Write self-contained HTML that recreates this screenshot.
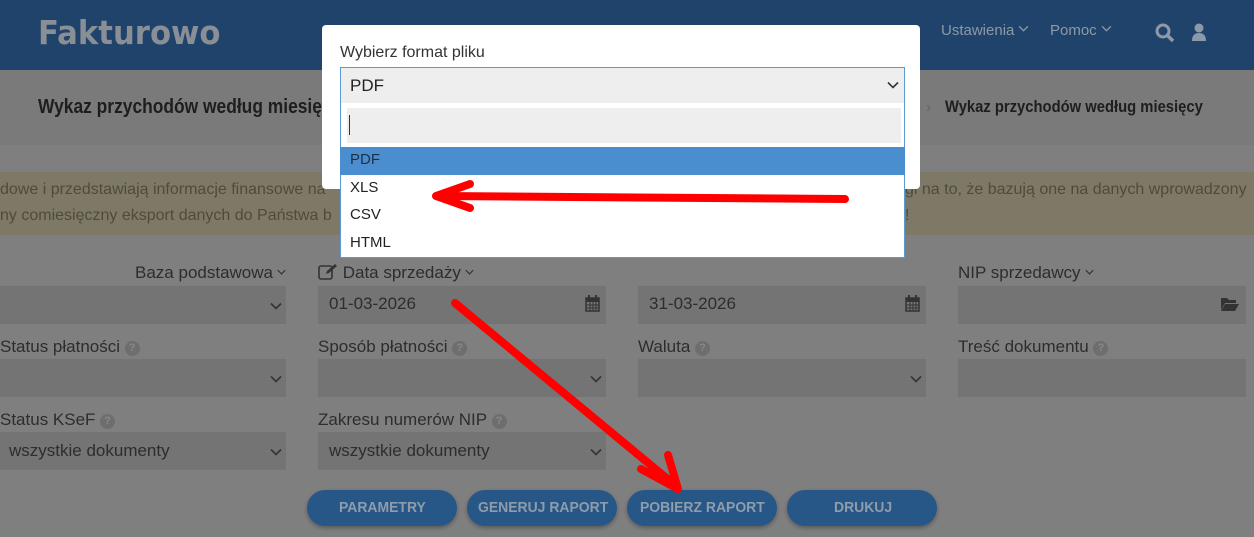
<!DOCTYPE html><html><head><meta charset="utf-8"><style>
*{margin:0;padding:0;box-sizing:border-box}
body{width:1254px;height:537px;overflow:hidden;background:#7f7f7f;font-family:"Liberation Sans",sans-serif;color:#2b2b2b;position:relative}
.a{position:absolute;white-space:nowrap}
.n{transform:scaleX(0.87);transform-origin:0 0}
.hdr{left:0;top:0;width:1254px;height:70px;background:#1f436a}
.logo{left:38px;top:13px;font:bold 33px "DejaVu Sans",sans-serif;color:#8a8f96;transform:scaleX(0.93);transform-origin:0 0}
.nav{top:22px;font-size:15px;color:#8c99a8}
.band{left:0;top:70px;width:1254px;height:75px;background:#7a7a7a}
.warn{left:0;top:172px;width:1254px;height:63px;background:#7e7967}
.wt{font-size:16px;color:#4f4a3a}
.lbl{font-size:17px;color:#2d2d2d}
.inp{background:#747474;height:38px}
.btn{height:36px;border-radius:18px;background:#275786;top:490px;width:150px;box-shadow:0 2px 4px rgba(0,0,0,.3)}
.bt{top:499px;font-size:15px;font-weight:bold;color:#8e9cab;transform:scaleX(0.93);transform-origin:0 0}
.q{display:inline-block;width:15px;height:15px;border-radius:50%;background:#6e6e6e;color:#888;font-size:11px;line-height:15px;text-align:center;vertical-align:1px;font-weight:bold}
.ic{display:inline-block;vertical-align:3px;margin-left:4px}
.modal{left:322px;top:25px;width:598px;height:164px;background:#fff;border-radius:4px}
.dd{left:340px;top:103px;width:565px;height:155px;background:#fff;border:1px solid #5b9bd5;border-top:none}
.opt{left:350px;font-size:15px;color:#222}
</style></head><body>
<svg width="0" height="0" style="position:absolute"><defs><symbol id="cv" viewBox="0 0 12 8"><path d="M1 1.5l5 5 5-5" stroke="#333" stroke-width="1.6" fill="none"/></symbol><symbol id="cn" viewBox="0 0 12 8"><path d="M1 1.5l5 5 5-5" stroke="#8c99a8" stroke-width="1.6" fill="none"/></symbol></defs></svg>
<div class="a hdr"></div>
<div class="a logo">Fakturowo</div>
<div class="a nav" style="left:941px">Ustawienia<svg class="ic" width="11" height="7"><use href="#cn"/></svg></div>
<div class="a nav" style="left:1050px">Pomoc<svg class="ic" width="11" height="7"><use href="#cn"/></svg></div>
<svg class="a" style="left:1155px;top:23px" width="20" height="20" viewBox="0 0 20 20"><circle cx="8" cy="8" r="6" stroke="#8c99a8" stroke-width="3" fill="none"/><path d="M12 12l6 6" stroke="#8c99a8" stroke-width="3.5"/></svg>
<svg class="a" style="left:1191px;top:23px" width="16" height="18" viewBox="0 0 16 18"><circle cx="8" cy="5" r="4.5" fill="#8c99a8"/><path d="M1 18c0-6 3-8 7-8s7 2 7 8z" fill="#8c99a8"/></svg>
<div class="a band"></div>
<div class="a n" style="left:38px;top:96px;font-size:20px;font-weight:bold;color:#1e1e1e">Wykaz przychodów według miesięcy</div>
<div class="a" style="left:926px;top:99px;font-size:16px;color:#666">›</div>
<div class="a n" style="left:945px;top:97px;font-size:17px;font-weight:bold;color:#1e1e1e">Wykaz przychodów według miesięcy</div>
<div class="a warn"></div>
<div class="a wt" style="left:0;top:181px">dowe i przedstawiają informacje finansowe na</div>
<div class="a wt" style="left:0;top:207px">ny comiesięczny eksport danych do Państwa b</div>
<div class="a wt" style="left:905px;top:181px">gi na to, że bazują one na danych wprowadzony</div>
<div class="a wt" style="left:905px;top:207px">!</div>

<div class="a lbl" style="right:968px;top:263px">Baza podstawowa<svg class="ic" width="9" height="6"><use href="#cv"/></svg></div>
<div class="a lbl" style="left:318px;top:263px"><svg width="20" height="17" viewBox="0 0 20 17" style="vertical-align:-2px"><rect x="1" y="3" width="13" height="13" rx="2" stroke="#333" stroke-width="1.6" fill="none"/><path d="M8 11l1-3 8-7 2 2-8 7z" fill="#333"/></svg> Data sprzedaży<svg class="ic" width="9" height="6"><use href="#cv"/></svg></div>
<div class="a lbl" style="left:958px;top:263px">NIP sprzedawcy<svg class="ic" width="9" height="6"><use href="#cv"/></svg></div>
<div class="a inp" style="left:0;top:286px;width:286px"></div><svg class="a" style="left:270px;top:302px" width="12" height="8"><use href="#cv"/></svg>
<div class="a inp" style="left:318px;top:286px;width:288px"></div><div class="a lbl" style="left:329px;top:294px">01-03-2026</div>
<svg class="a" style="left:585px;top:295px" width="15" height="17" viewBox="0 0 15 17"><rect x="1" y="3" width="13" height="13" fill="none" stroke="#333" stroke-width="1.5"/><rect x="1" y="3" width="13" height="4" fill="#333"/><path d="M1 10h13M1 13h13M5 7v9M8 7v9M11 7v9" stroke="#333"/><rect x="3" y="0" width="2" height="4" fill="#333"/><rect x="10" y="0" width="2" height="4" fill="#333"/></svg>
<div class="a inp" style="left:638px;top:286px;width:288px"></div><div class="a lbl" style="left:649px;top:294px">31-03-2026</div>
<svg class="a" style="left:905px;top:295px" width="15" height="17" viewBox="0 0 15 17"><rect x="1" y="3" width="13" height="13" fill="none" stroke="#333" stroke-width="1.5"/><rect x="1" y="3" width="13" height="4" fill="#333"/><path d="M1 10h13M1 13h13M5 7v9M8 7v9M11 7v9" stroke="#333"/><rect x="3" y="0" width="2" height="4" fill="#333"/><rect x="10" y="0" width="2" height="4" fill="#333"/></svg>
<div class="a inp" style="left:958px;top:286px;width:288px"></div>
<svg class="a" style="left:1221px;top:297px" width="18" height="14" viewBox="0 0 18 14"><path d="M0 1h6l2 2h7v3H4L0 13z" fill="#333"/><path d="M4 7h14l-4 7H0z" fill="#333"/></svg>

<div class="a lbl" style="left:0;top:337px">Status płatności <span class="q">?</span></div>
<div class="a lbl" style="left:318px;top:337px">Sposób płatności <span class="q">?</span></div>
<div class="a lbl" style="left:638px;top:337px">Waluta <span class="q">?</span></div>
<div class="a lbl" style="left:958px;top:337px">Treść dokumentu <span class="q">?</span></div>
<div class="a inp" style="left:0;top:359px;width:286px"></div><svg class="a" style="left:270px;top:375px" width="12" height="8"><use href="#cv"/></svg>
<div class="a inp" style="left:318px;top:359px;width:288px"></div><svg class="a" style="left:590px;top:375px" width="12" height="8"><use href="#cv"/></svg>
<div class="a inp" style="left:638px;top:359px;width:288px"></div><svg class="a" style="left:910px;top:375px" width="12" height="8"><use href="#cv"/></svg>
<div class="a inp" style="left:958px;top:359px;width:288px"></div>

<div class="a lbl" style="left:0;top:410px">Status KSeF <span class="q">?</span></div>
<div class="a lbl" style="left:318px;top:410px">Zakresu numerów NIP <span class="q">?</span></div>
<div class="a inp" style="left:0;top:432px;width:286px"></div><div class="a lbl" style="left:9px;top:441px">wszystkie dokumenty</div><svg class="a" style="left:270px;top:448px" width="12" height="8"><use href="#cv"/></svg>
<div class="a inp" style="left:318px;top:432px;width:288px"></div><div class="a lbl" style="left:329px;top:441px">wszystkie dokumenty</div><svg class="a" style="left:590px;top:448px" width="12" height="8"><use href="#cv"/></svg>

<div class="a btn" style="left:307px"></div><div class="a bt" style="left:339px">PARAMETRY</div>
<div class="a btn" style="left:467px"></div><div class="a bt" style="left:478px">GENERUJ RAPORT</div>
<div class="a btn" style="left:627px"></div><div class="a bt" style="left:640px">POBIERZ RAPORT</div>
<div class="a btn" style="left:787px"></div><div class="a bt" style="left:834px">DRUKUJ</div>

<div class="a modal"></div>
<div class="a" style="left:340px;top:44px;font-size:16px;color:#333">Wybierz format pliku</div>
<div class="a" style="left:340px;top:67px;width:565px;height:37px;background:#eee;border:1px solid #5b9bd5"></div>
<div class="a" style="left:350px;top:76px;font-size:17px;color:#222">PDF</div>
<svg class="a" style="left:887px;top:81px" width="12" height="8"><use href="#cv"/></svg>
<div class="a dd"></div>
<div class="a" style="left:347px;top:108px;width:554px;height:35px;background:#eee"></div>
<div class="a" style="left:349px;top:115px;width:1px;height:20px;background:#333"></div>
<div class="a" style="left:340px;top:147px;width:565px;height:28px;background:#4a8ed0"></div>
<div class="a opt" style="left:350px;top:151px;color:#1f2f44">PDF</div>
<div class="a opt" style="top:179px">XLS</div>
<div class="a opt" style="top:206px">CSV</div>
<div class="a opt" style="top:234px">HTML</div>

<svg class="a" style="left:0;top:0" width="1254" height="537">
<g stroke="#f00" stroke-width="8" stroke-linecap="round" stroke-linejoin="round" fill="none">
<path d="M845 199L440 196"/><path d="M470 184L436 196L470 208"/>
<path d="M455 303L676 486"/><path d="M641 469L678 489L668 455"/>
</g></svg>
</body></html>
